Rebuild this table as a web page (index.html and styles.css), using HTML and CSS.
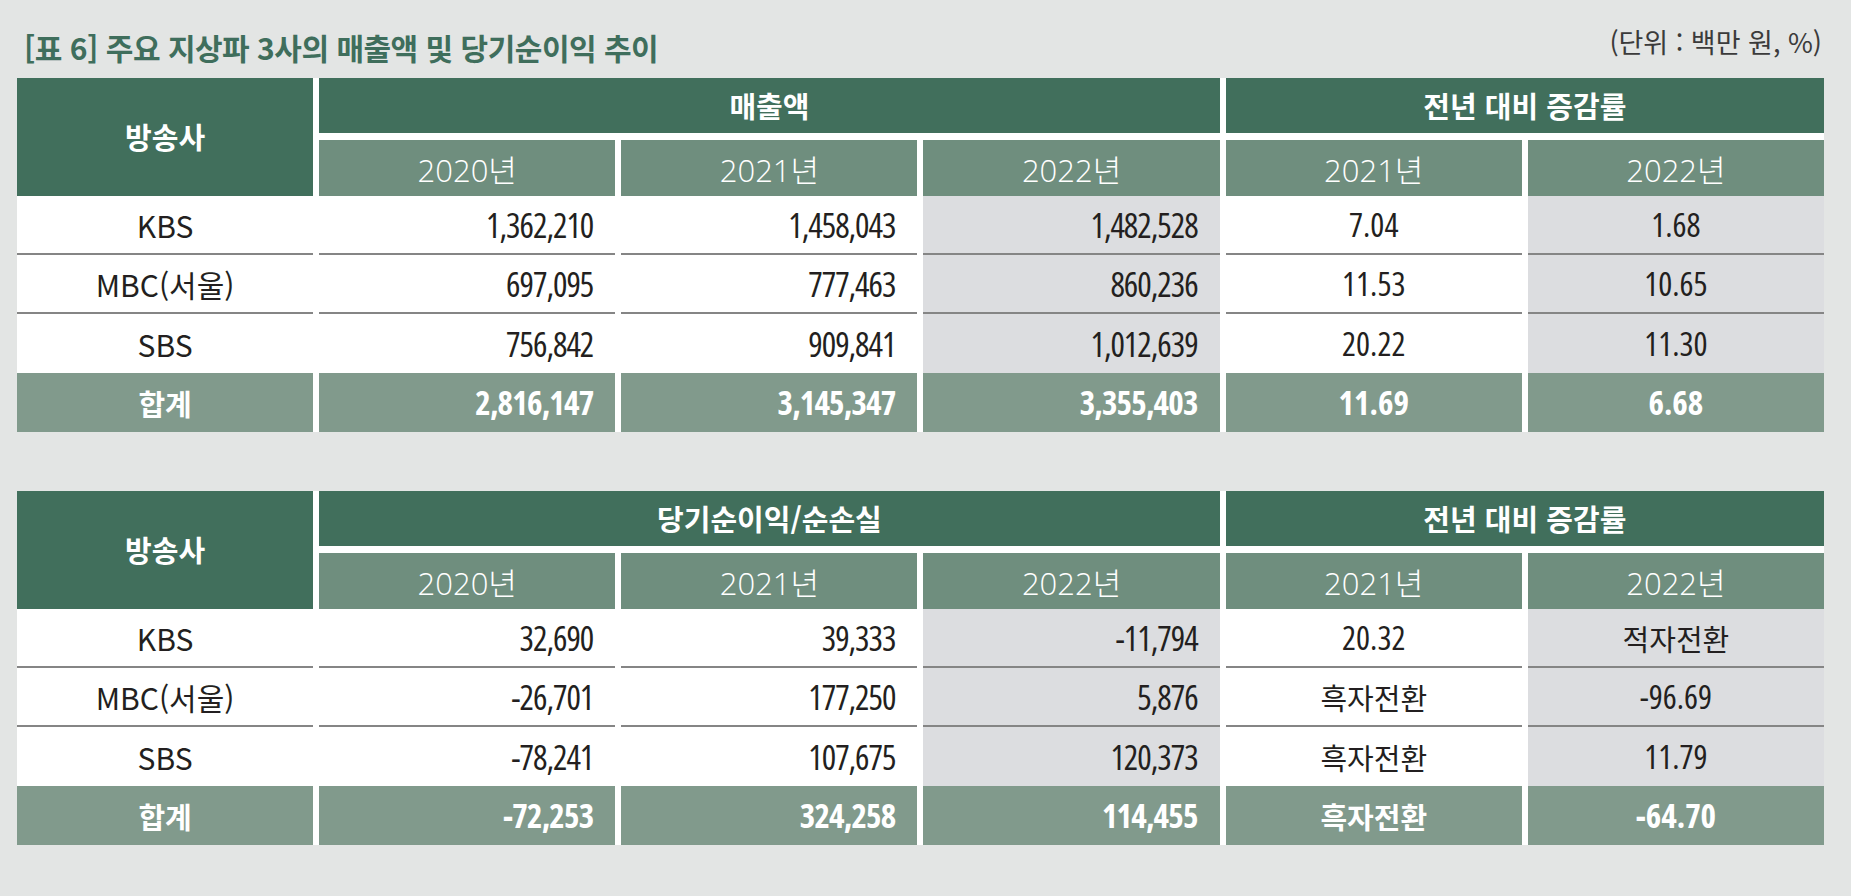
FILE: index.html
```html
<!DOCTYPE html>
<html lang="ko">
<head>
<meta charset="utf-8">
<title>주요 지상파 3사의 매출액 및 당기순이익 추이</title>
<link rel="stylesheet" href="styles.css">
</head>
<body>
<div class="page">
  <div class="caption">
    <h1 class="title">[표 6] 주요 지상파 3사의 매출액 및 당기순이익 추이</h1>
    <div class="unit">(단위 : 백만 원, %)</div>
  </div>

  <div class="grid">
    <div class="c h1 corner">방송사</div>
    <div class="c h1 span3">매출액</div>
    <div class="c h1 span2">전년 대비 증감률</div>
    <div class="c h2">2020년</div>
    <div class="c h2">2021년</div>
    <div class="c h2">2022년</div>
    <div class="c h2">2021년</div>
    <div class="c h2">2022년</div>

    <div class="c d name line">KBS</div>
    <div class="c d num line">1,362,210</div>
    <div class="c d num line">1,458,043</div>
    <div class="c d num line shade">1,482,528</div>
    <div class="c d mid line">7.04</div>
    <div class="c d mid line shade">1.68</div>

    <div class="c d name line">MBC(서울)</div>
    <div class="c d num line">697,095</div>
    <div class="c d num line">777,463</div>
    <div class="c d num line shade">860,236</div>
    <div class="c d mid line">11.53</div>
    <div class="c d mid line shade">10.65</div>

    <div class="c d name">SBS</div>
    <div class="c d num">756,842</div>
    <div class="c d num">909,841</div>
    <div class="c d num shade">1,012,639</div>
    <div class="c d mid">20.22</div>
    <div class="c d mid shade">11.30</div>

    <div class="c t name">합계</div>
    <div class="c t num">2,816,147</div>
    <div class="c t num">3,145,347</div>
    <div class="c t num">3,355,403</div>
    <div class="c t mid">11.69</div>
    <div class="c t mid">6.68</div>
  </div>

  <div class="grid second">
    <div class="c h1 corner">방송사</div>
    <div class="c h1 span3">당기순이익/순손실</div>
    <div class="c h1 span2">전년 대비 증감률</div>
    <div class="c h2">2020년</div>
    <div class="c h2">2021년</div>
    <div class="c h2">2022년</div>
    <div class="c h2">2021년</div>
    <div class="c h2">2022년</div>

    <div class="c d name line">KBS</div>
    <div class="c d num line">32,690</div>
    <div class="c d num line">39,333</div>
    <div class="c d num line shade">-11,794</div>
    <div class="c d mid line">20.32</div>
    <div class="c d mid line shade ko">적자전환</div>

    <div class="c d name line">MBC(서울)</div>
    <div class="c d num line">-26,701</div>
    <div class="c d num line">177,250</div>
    <div class="c d num line shade">5,876</div>
    <div class="c d mid line ko">흑자전환</div>
    <div class="c d mid line shade">-96.69</div>

    <div class="c d name">SBS</div>
    <div class="c d num">-78,241</div>
    <div class="c d num">107,675</div>
    <div class="c d num shade">120,373</div>
    <div class="c d mid ko">흑자전환</div>
    <div class="c d mid shade">11.79</div>

    <div class="c t name">합계</div>
    <div class="c t num">-72,253</div>
    <div class="c t num">324,258</div>
    <div class="c t num">114,455</div>
    <div class="c t mid ko">흑자전환</div>
    <div class="c t mid">-64.70</div>
  </div>
</div>
</body>
</html>
```

FILE: styles.css
```css
* {
  box-sizing: border-box;
}

html,
body {
  margin: 0;
  padding: 0;
  background: #e3e5e4;
}

body {
  font-family: "Noto Sans CJK KR", "Noto Sans", sans-serif;
  color: #231f20;
}

.page {
  width: 1851px;
  height: 896px;
  padding: 0 27px 0 17px;
}

.caption {
  height: 78px;
  display: flex;
  justify-content: space-between;
  align-items: flex-end;
  padding-bottom: 13px;
}

.title {
  margin: 0 0 0 7px;
  font-size: 30px;
  line-height: 36px;
  font-weight: 700;
  color: #3f6e5c;
  letter-spacing: -0.5px;
}

.unit {
  font-size: 27px;
  line-height: 36px;
  color: #3b3b3b;
  margin-bottom: 5px;
  margin-right: 2px;
}

.grid {
  display: grid;
  grid-template-columns: repeat(6, 1fr);
  grid-template-rows: 55px 63px 59px 59px 59px 59px;
  column-gap: 6px;
  background: #ffffff;
  width: 1807px;
}

.grid.second {
  margin-top: 59px;
}

.c {
  display: flex;
  align-items: center;
  font-size: 30px;
  white-space: nowrap;
}

.h1 {
  background: #416f5c;
  color: #ffffff;
  font-weight: 700;
  font-size: 29px;
  justify-content: center;
  padding-bottom: 2px;
}

.corner {
  grid-row: span 2;
}

.span3 {
  grid-column: span 3;
}

.span2 {
  grid-column: span 2;
}

.h2 {
  background: #6f8e7e;
  color: #ffffff;
  justify-content: center;
  margin-top: 7px;
  font-family: "Open Sans", "Noto Sans CJK KR", sans-serif;
  font-weight: 300;
  font-size: 31px;
}

.d {
  background: #ffffff;
}

.d.shade {
  background: #dcdde0;
}

.line {
  border-bottom: 2px solid #858585;
}

.t {
  background: #819a8c;
  color: #ffffff;
  font-weight: 700;
}

.name,
.mid {
  justify-content: center;
}

.num,
.mid {
  font-family: "Open Sans", "Noto Sans CJK KR", sans-serif;
  font-stretch: 75%;
}

.num {
  justify-content: flex-end;
  padding-right: 22px;
  font-size: 34px;
  letter-spacing: -1px;
}

.t.num {
  font-size: 33px;
  letter-spacing: -0.8px;
}

.mid {
  font-size: 33px;
}

.mid.ko {
  font-size: 29px;
}

.t.name {
  font-size: 29px;
}
```
